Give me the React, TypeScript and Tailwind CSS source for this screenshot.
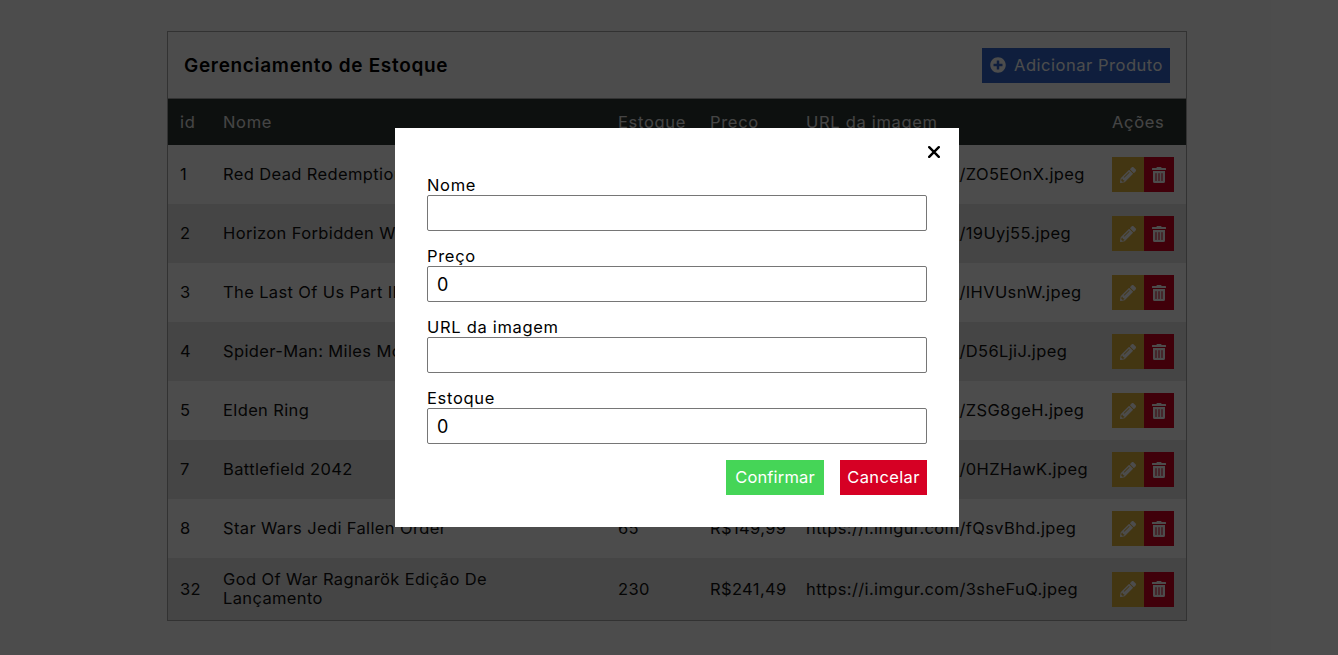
import { FaPencilAlt, FaTrashAlt, FaPlusCircle } from "react-icons/fa";

const rows = [
  ["1", "Red Dead Redemption 2", "120", "R$199,90", "https://i.imgur.com/ZO5EOnX.jpeg"],
  ["2", "Horizon Forbidden West", "95", "R$249,90", "https://i.imgur.com/19Uyj55.jpeg"],
  ["3", "The Last Of Us Part II", "80", "R$129,90", "https://i.imgur.com/IHVUsnW.jpeg"],
  ["4", "Spider-Man: Miles Morales", "150", "R$179,90", "https://i.imgur.com/D56LjiJ.jpeg"],
  ["5", "Elden Ring", "200", "R$229,90", "https://i.imgur.com/ZSG8geH.jpeg"],
  ["7", "Battlefield 2042", "70", "R$159,90", "https://i.imgur.com/0HZHawK.jpeg"],
  ["8", "Star Wars Jedi Fallen Order", "65", "R$149,99", "https://i.imgur.com/fQsvBhd.jpeg"],
  ["32", "God Of War Ragnarök Edição De Lançamento", "230", "R$241,49", "https://i.imgur.com/3sheFuQ.jpeg"],
];

const fields = [
  ["Nome", ""],
  ["Preço", "0"],
  ["URL da imagem", ""],
  ["Estoque", "0"],
];

export default function App() {
  return (
    <div className="relative h-[655px] w-full overflow-hidden bg-white font-['Inter','Liberation_Sans',sans-serif] text-[16.5px] tracking-[0.37px] text-[#111111]">
      <div className="flex justify-center pl-4 pt-[31px]">
        <div className="w-[1020px] border border-[#a8a8a8]">
          <div className="flex h-[67px] items-center justify-between border-b border-[#a8a8a8] pl-4 pr-4">
            <h1 className="pt-[3px] text-[19px] font-semibold tracking-[0.68px] text-black">Gerenciamento de Estoque</h1>
            <button className="flex h-[35px] w-[188px] items-center gap-2 bg-[#3367cc] pl-2 tracking-[0.53px] text-white">
              <FaPlusCircle className="h-4 w-4" />
              <span>Adicionar Produto</span>
            </button>
          </div>
          <table className="w-full table-fixed border-collapse text-left">
            <colgroup>
              <col className="w-[55px]" />
              <col className="w-[395px]" />
              <col className="w-[92px]" />
              <col className="w-[96px]" />
              <col className="w-[306px]" />
              <col />
            </colgroup>
            <thead>
              <tr className="h-[46px] bg-[#2d3632] tracking-[0.69px] text-[#e8e8e8]">
                <th className="pl-3 font-normal">id</th>
                <th className="font-normal">Nome</th>
                <th className="font-normal">Estoque</th>
                <th className="font-normal">Preço</th>
                <th className="font-normal">URL da imagem</th>
                <th className="font-normal">Ações</th>
              </tr>
            </thead>
            <tbody>
              {rows.map((r, i) => (
                <tr key={r[0]} className={`${i === 7 ? "h-[62px]" : "h-[59px]"} ${i % 2 === 1 ? "bg-[#e6e6e6]" : "bg-white"}`}>
                  <td className="pl-3">{r[0]}</td>
                  <td className="pr-[100px] leading-[19px]">{r[1]}</td>
                  <td>{r[2]}</td>
                  <td>{r[3]}</td>
                  <td>{r[4]}</td>
                  <td>
                    <div className="flex">
                      <button className="flex h-[35px] w-8 items-center justify-center bg-[#e0b43c] text-white">
                        <FaPencilAlt className="h-4 w-4" />
                      </button>
                      <button className="flex h-[35px] w-[30px] items-center justify-center bg-[#d60024] text-white">
                        <FaTrashAlt className="h-4 w-4" />
                      </button>
                    </div>
                  </td>
                </tr>
              ))}
            </tbody>
          </table>
        </div>
      </div>

      <div className="absolute inset-0 flex items-center justify-center bg-black/70 pl-4">
        <div className="relative h-[399px] w-[564px] bg-white px-8 pt-[47px] tracking-[0.69px] text-black">
          <button className="absolute right-[19px] top-[18px] text-black">
            <svg width="12" height="12" viewBox="0 0 12 12" fill="none" stroke="currentColor" strokeWidth="2.4" strokeLinecap="round">
              <path d="M1.2 1.2 10.8 10.8M10.8 1.2 1.2 10.8" />
            </svg>
          </button>
          <div className="flex flex-col gap-[15px]">
            {fields.map(([label, value]) => (
              <label key={label} className="block">
                <span className="block h-[20px] leading-[20px]">{label}</span>
                <input
                  readOnly
                  value={value}
                  className="block h-9 w-full rounded-[2px] border border-[#767676] px-[9px] text-[18px] text-black"
                />
              </label>
            ))}
          </div>
          <div className="mt-4 flex justify-end gap-4">
            <button className="h-[35px] w-[98px] bg-[#45d557] tracking-[0.15px] text-white">Confirmar</button>
            <button className="h-[35px] w-[87px] bg-[#d60024] tracking-[0.37px] text-white">Cancelar</button>
          </div>
        </div>
      </div>
    </div>
  );
}
